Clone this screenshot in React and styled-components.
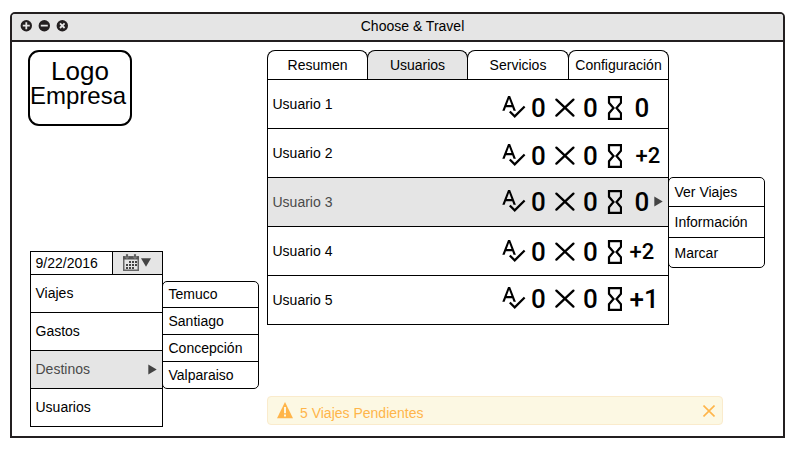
import React from "react";
import styled, { createGlobalStyle } from "styled-components";

const ink = "#231f20";
const shade = "#e5e5e5";
const amber = "#ffb54a";

const GlobalStyle = createGlobalStyle`
  *, *::before, *::after { box-sizing: border-box; }
  body {
    margin: 0;
    background: #fff;
    color: #000;
    font: 14px/16px "Liberation Sans", Arial, sans-serif;
  }
  svg { display: block; flex: none; }
`;

const Page = styled.div`
  height: 452px;
  padding: 12px 10px 14px;
`;

const Window = styled.main`
  display: flex;
  flex-direction: column;
  height: 426px;
  border: 2px solid ${ink};
  border-radius: 5px 5px 0 0;
  overflow: hidden;
`;

const TitleBar = styled.header`
  display: flex;
  align-items: center;
  height: 28px;
  flex: none;
  background: ${shade};
  border-bottom: 2px solid ${ink};
`;

const WindowButtons = styled.div`
  display: flex;
  gap: 6px;
  padding-left: 8px;
  padding-bottom: 3px;
`;

const Title = styled.h1`
  flex: 1;
  margin: 0;
  padding-bottom: 2px;
  padding-right: 26px;
  font-size: 14px;
  font-weight: 400;
  text-align: center;
`;

const Body = styled.div`
  flex: 1;
  display: flex;
`;

const Sidebar = styled.aside`
  display: flex;
  flex-direction: column;
  justify-content: space-between;
  width: 255px;
  padding: 8px 0 9px 16px;
`;

const Logo = styled.div`
  width: 104px;
  height: 76px;
  padding-top: 6px;
  border: 2px solid #000;
  border-radius: 11px;
`;

const LogoTop = styled.div`
  font-size: 26px;
  line-height: 26px;
  text-align: center;
`;

const LogoBottom = styled.div`
  font-size: 24px;
  line-height: 24px;
`;

const MenuGroup = styled.div`
  display: flex;
  align-items: flex-start;
  padding-left: 2px;
`;

const SideMenu = styled.nav`
  width: 133px;
  border: 1px solid #000;
`;

const DateField = styled.div`
  display: flex;
  height: 22px;
`;

const DateValue = styled.div`
  width: 81px;
  padding-left: 4.5px;
  line-height: 23px;
`;

const DateButton = styled.div`
  flex: 1;
  display: flex;
  align-items: center;
  gap: 2px;
  padding: 0 0 1px 10px;
  border-left: 1px solid #000;
  background: ${shade};
`;

const SideItem = styled.div`
  display: flex;
  align-items: center;
  justify-content: space-between;
  height: 38px;
  padding: 0 5px 1px 4.5px;
  border-top: 1px solid #000;
  color: ${(p) => (p.$active ? "#4a4a4a" : "#000")};
  background: ${(p) => (p.$active ? shade : "#fff")};
`;

const SubMenu = styled.div`
  width: 97px;
  margin: ${(p) => p.$top}px 0 0 -1px;
  border: 1px solid #000;
  border-radius: 5px;
`;

const SubItem = styled.div`
  height: ${(p) => p.$height}px;
  padding-left: 5.5px;
  line-height: ${(p) => p.$line}px;

  & + & { border-top: 1px solid #000; }
`;

const Main = styled.section`
  display: flex;
  flex-direction: column;
  justify-content: space-between;
  padding: 8px 0 10px;
`;

const UserArea = styled.div`
  display: flex;
  align-items: flex-start;
`;

const Panel = styled.div`
  width: 402px;
`;

const Tabs = styled.div`
  display: grid;
  grid-template-columns: 100px 100px 101px 101px;
  height: 29px;
`;

const Tab = styled.div`
  height: 29px;
  margin-right: ${(p) => (p.$last ? 0 : -1)}px;
  border: 1px solid #000;
  border-bottom: 0;
  border-radius: 8px 8px 0 0;
  background: ${(p) => (p.$active ? shade : "#fff")};
  line-height: 29px;
  text-align: center;
`;

const Users = styled.div`
  border: 1px solid #000;
`;

const UserRow = styled.div`
  display: flex;
  height: ${(p) => (p.$last ? 48 : 49)}px;
  border-bottom: ${(p) => (p.$last ? 0 : 1)}px solid #000;
  background: ${(p) => (p.$active ? shade : "#fff")};
  color: ${(p) => (p.$active ? "#4a4a4a" : "#000")};
`;

const UserName = styled.div`
  width: 234px;
  padding-left: 4.5px;
  line-height: 49px;
`;

const Stats = styled.div`
  display: flex;
  align-items: center;
  height: 24px;
  margin-top: ${(p) => p.$top}px;
  color: #000;
`;

const Count = styled.span`
  width: ${(p) => p.$width}px;
  padding-left: ${(p) => p.$indent}px;
  font: 500 ${(p) => p.$size}px/24px Roboto, sans-serif;
  white-space: nowrap;
`;

const RowArrow = styled.div`
  padding-top: 18px;
`;

const Alert = styled.div`
  display: flex;
  align-items: center;
  width: 456px;
  height: 29px;
  margin-bottom: 1px;
  padding: 0 7px 0 9px;
  border: 1px solid #faebcc;
  border-radius: 4px;
  background: #fcf8e3;
  color: ${amber};
`;

const AlertText = styled.span`
  flex: 1;
  padding: 4px 0 0 7px;
`;

const BUTTON_MARKS = [
  "M6 2.5V9.5M2.5 6H9.5",
  "M2.5 6H9.5",
  "M3.7 3.7L8.3 8.3M8.3 3.7L3.7 8.3",
];

const WindowButton = ({ mark }) => (
  <svg width="12" height="12" viewBox="-.3 .3 12 12">
    <circle cx="6" cy="6" r="5.7" fill={ink} />
    <path d={mark} stroke={shade} strokeWidth="1.8" />
  </svg>
);

const Spellcheck = () => (
  <svg width="24" height="24" viewBox="2.2 3 21.33 21.33">
    <path d="M12.45 16h2.09L9.43 3H7.57L2.46 16h2.09l1.12-3h5.64l1.14 3zm-6.02-5L8.5 5.48 10.57 11H6.43zm15.16.59l-8.09 8.09L9.83 16l-1.41 1.41 5.09 5.09L23 13l-1.41-1.41z" />
  </svg>
);

const Cross = () => (
  <svg width="20" height="24" viewBox="0 0 20 24">
    <path
      d="M1.4 3.6L18.4 19.6M18.4 3.6L1.4 19.6"
      stroke="#000"
      strokeWidth="2.3"
      strokeLinecap="round"
    />
  </svg>
);

const Hourglass = () => (
  <svg width="15" height="24" viewBox="-1 0 15 24">
    <path
      d="M1 1.1H13V6.8L8.5 12L13 17.2V22.9H1V17.2L5.5 12L1 6.8Z"
      fill="none"
      stroke="#000"
      strokeWidth="2.2"
    />
  </svg>
);

const ArrowRight = () => (
  <svg width="9" height="11" viewBox="0 0 9 11">
    <path d="M.3 .5L8.7 5.5L.3 10.5Z" fill="#444" />
  </svg>
);

const ArrowDown = () => (
  <svg width="10" height="9" viewBox="0 0 10 9">
    <path d="M0 .3H10L5 8.7Z" fill="#444" />
  </svg>
);

const Calendar = () => (
  <svg width="16" height="17" viewBox="0 0 16 17">
    <path d="M.75 3H15.25V16.25H.75Z" fill="#e5e5e5" stroke="#666" strokeWidth="1.5" />
    <path d="M0 2.2H16V5.5H0Z" fill="#555" />
    <path d="M3 0H5V4H3ZM11 0H13V4H11Z" fill="#444" stroke="#bbb" strokeWidth=".5" />
    <path
      d="M6 7H8V9H6ZM9 7H11V9H9ZM12 7H14V9H12ZM3 10H5V12H3ZM6 10H8V12H6ZM9 10H11V12H9ZM12 10H14V12H12ZM3 13H5V15H3ZM6 13H8V15H6ZM9 13H11V15H9Z"
      fill="#444"
    />
  </svg>
);

const Warning = () => (
  <svg width="16" height="17" viewBox="0 .8 16 17">
    <path d="M8 .8L16 17H0Z" fill={amber} />
    <path d="M7 5.8H9V12H7ZM7 13.3H9V15.3H7Z" fill="#fcf8e3" />
  </svg>
);

const Close = () => (
  <svg width="12" height="12" viewBox="0 0 12 12">
    <path d="M.5 .5L11.5 11.5M11.5 .5L.5 11.5" stroke={amber} strokeWidth="1.6" />
  </svg>
);

const sideItems = ["Viajes", "Gastos", "Destinos", "Usuarios"];
const cities = [
  { label: "Temuco", height: 25, line: 25 },
  { label: "Santiago", height: 27, line: 27 },
  { label: "Concepción", height: 27, line: 27 },
  { label: "Valparaiso", height: 27, line: 27 },
];
const actions = [
  { label: "Ver Viajes", height: 28, line: 28 },
  { label: "Información", height: 31, line: 30 },
  { label: "Marcar", height: 30, line: 31 },
];
const tabs = ["Resumen", "Usuarios", "Servicios", "Configuración"];
const users = [
  { name: "Usuario 1", top: 16, pending: "0", indent: 12.5, size: 26 },
  { name: "Usuario 2", top: 15, pending: "+2", indent: 13.5, size: 22 },
  { name: "Usuario 3", top: 12, pending: "0", indent: 12.5, size: 26 },
  { name: "Usuario 4", top: 13, pending: "+2", indent: 7.5, size: 22 },
  { name: "Usuario 5", top: 11, pending: "+1", indent: 7.5, size: 26 },
];

export default function App() {
  return (
    <Page>
      <GlobalStyle />
      <Window>
        <TitleBar>
          <WindowButtons>
            {BUTTON_MARKS.map((mark) => (
              <WindowButton key={mark} mark={mark} />
            ))}
          </WindowButtons>
          <Title>Choose &amp; Travel</Title>
        </TitleBar>
        <Body>
          <Sidebar>
            <Logo>
              <LogoTop>Logo</LogoTop>
              <LogoBottom>Empresa</LogoBottom>
            </Logo>
            <MenuGroup>
              <SideMenu>
                <DateField>
                  <DateValue>9/22/2016</DateValue>
                  <DateButton>
                    <Calendar />
                    <ArrowDown />
                  </DateButton>
                </DateField>
                {sideItems.map((label) => (
                  <SideItem key={label} $active={label === "Destinos"}>
                    {label}
                    {label === "Destinos" && <ArrowRight />}
                  </SideItem>
                ))}
              </SideMenu>
              <SubMenu $top={30}>
                {cities.map((c) => (
                  <SubItem key={c.label} $height={c.height} $line={c.line}>
                    {c.label}
                  </SubItem>
                ))}
              </SubMenu>
            </MenuGroup>
          </Sidebar>
          <Main>
            <UserArea>
              <Panel>
                <Tabs>
                  {tabs.map((label, i) => (
                    <Tab key={label} $active={label === "Usuarios"} $last={i === 3}>
                      {label}
                    </Tab>
                  ))}
                </Tabs>
                <Users>
                  {users.map((u, i) => (
                    <UserRow key={u.name} $active={i === 2} $last={i === 4}>
                      <UserName>{u.name}</UserName>
                      <Stats $top={u.top}>
                        <Spellcheck />
                        <Count $width={29} $indent={5} $size={26}>0</Count>
                        <Cross />
                        <Count $width={32} $indent={8} $size={26}>0</Count>
                        <Hourglass />
                        <Count $width={32} $indent={u.indent} $size={u.size}>
                          {u.pending}
                        </Count>
                      </Stats>
                      {i === 2 && (
                        <RowArrow>
                          <ArrowRight />
                        </RowArrow>
                      )}
                    </UserRow>
                  ))}
                </Users>
              </Panel>
              <SubMenu $top={127}>
                {actions.map((a) => (
                  <SubItem key={a.label} $height={a.height} $line={a.line}>
                    {a.label}
                  </SubItem>
                ))}
              </SubMenu>
            </UserArea>
            <Alert>
              <Warning />
              <AlertText>5 Viajes Pendientes</AlertText>
              <Close />
            </Alert>
          </Main>
        </Body>
      </Window>
    </Page>
  );
}
